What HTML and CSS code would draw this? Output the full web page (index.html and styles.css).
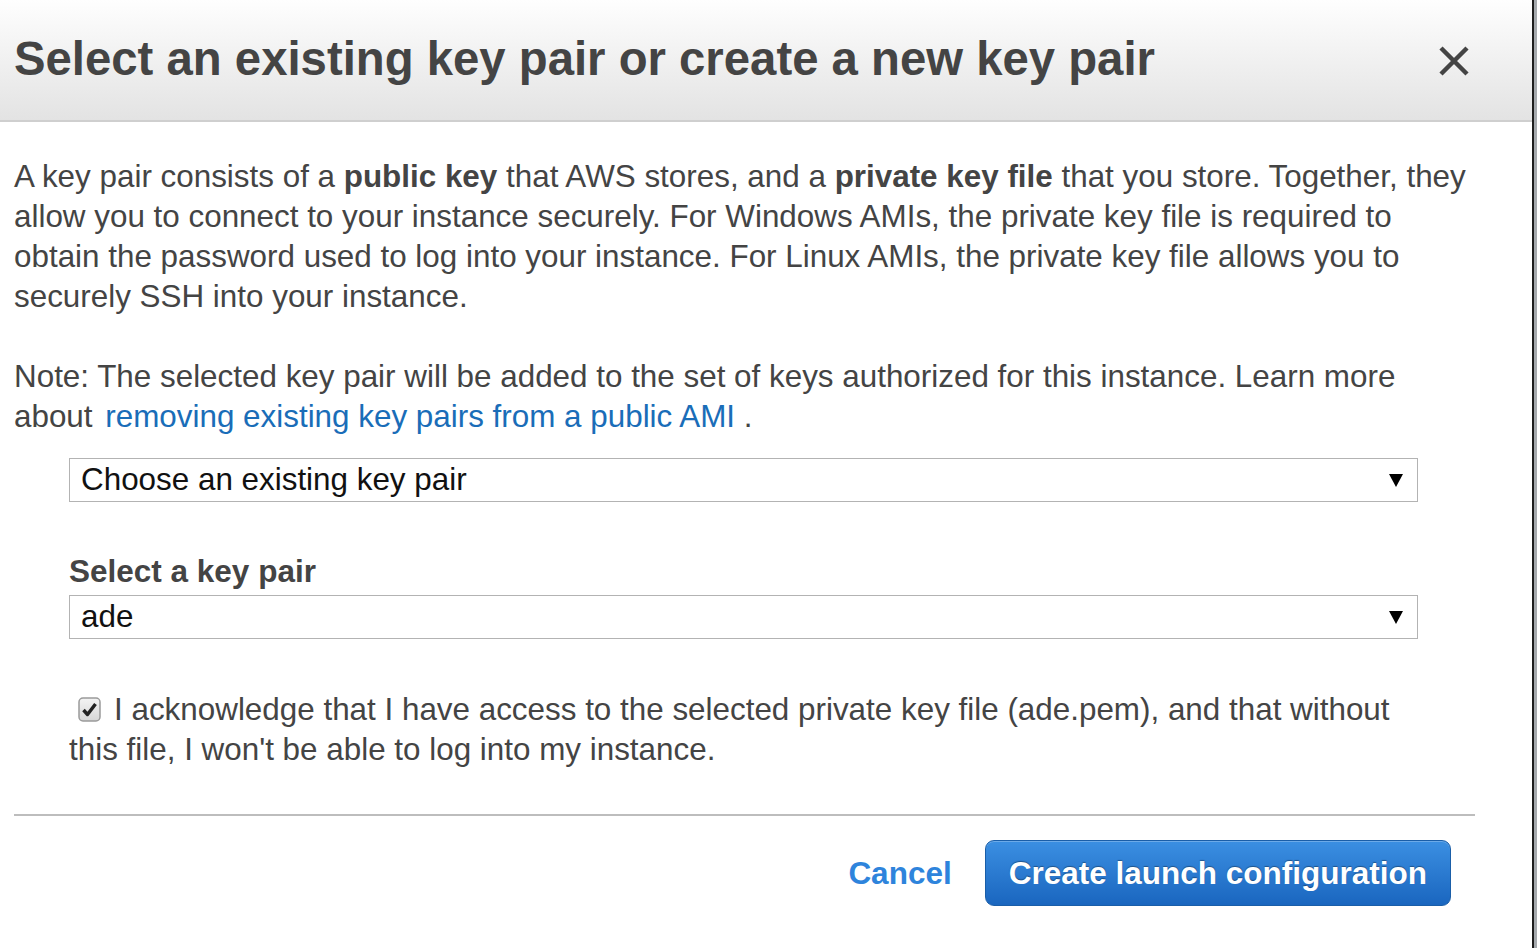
FILE: index.html
```html
<!DOCTYPE html>
<html>
<head>
<meta charset="utf-8">
<link rel="stylesheet" href="styles.css">
</head>
<body>
<div class="page">
  <div class="dialog">
    <div class="header">
      <h1 class="title">Select an existing key pair or create a new key pair</h1>
      <span class="close" aria-label="Close">
        <svg width="32" height="32" viewBox="0 0 32 32"><path d="M3 3 L29 29 M29 3 L3 29" stroke="#444" stroke-width="4.5" fill="none"/></svg>
      </span>
    </div>
    <div class="body">
      <p class="para">A key pair consists of a <b>public key</b> that AWS stores, and a <b>private key file</b> that you store. Together, they allow you to connect to your instance securely. For Windows AMIs, the private key file is required to obtain the password used to log into your instance. For Linux AMIs, the private key file allows you to securely SSH into your instance.</p>
      <p class="para note">Note: The selected key pair will be added to the set of keys authorized for this instance. Learn more about <a class="link" href="#">removing existing key pairs from a public AMI</a> .</p>
      <div class="form">
        <div class="select first">
          <span class="select-text">Choose an existing key pair</span>
          <svg class="arrow" width="14" height="13" viewBox="0 0 14 13"><polygon points="0,0 14,0 7,13" fill="#000"/></svg>
        </div>
        <div class="label">Select a key pair</div>
        <div class="select">
          <span class="select-text">ade</span>
          <svg class="arrow" width="14" height="13" viewBox="0 0 14 13"><polygon points="0,0 14,0 7,13" fill="#000"/></svg>
        </div>
        <p class="ack"><span class="checkbox"><svg width="23" height="25" viewBox="0 0 23 25"><defs><linearGradient id="cb" x1="0" y1="0" x2="0" y2="1"><stop offset="0" stop-color="#f4f4f4"/><stop offset="1" stop-color="#d6d6d6"/></linearGradient></defs><rect x="1" y="1" width="21" height="23" rx="4" fill="url(#cb)" stroke="#9a9a9a" stroke-width="1.5"/><path d="M5.5 13 L9.5 17.5 L17.5 7" stroke="#222" stroke-width="3.4" fill="none" stroke-linejoin="round"/></svg></span>I acknowledge that I have access to the selected private key file (ade.pem), and that without this file, I won't be able to log into my instance.</p>
      </div>
    </div>
    <div class="divider"></div>
    <div class="footer">
      <a class="cancel" href="#">Cancel</a>
      <button class="primary">Create launch configuration</button>
    </div>
  </div>
  <div class="edge"></div>
</div>
</body>
</html>
```

FILE: styles.css
```css
html, body {
  margin: 0;
  padding: 0;
  background: #fff;
}
body {
  font-family: "Liberation Sans", Arial, sans-serif;
  color: #444;
  overflow: hidden;
}
.page {
  display: flex;
  height: 948px;
}
.dialog {
  width: 1532px;
  display: flex;
  flex-direction: column;
}
.edge {
  width: 5px;
  border-left: 2px solid #1e1e1e;
  background: #a6aaae;
  box-sizing: border-box;
}
.header {
  height: 120px;
  background: linear-gradient(#fefefe, #e3e3e3);
  border-bottom: 2px solid #cfcfcf;
  display: flex;
  align-items: center;
  justify-content: space-between;
  padding: 0 62px 0 14px;
}
.title {
  margin: 0 0 4px 0;
  font-size: 47.3px;
  font-weight: bold;
  color: #444;
}
.close {
  display: flex;
  margin-top: 2px;
}
.body {
  padding: 35px 0 0 14px;
}
.para {
  margin: 0 0 40px 0;
  font-size: 31.4px;
  line-height: 40px;
  width: 1466px;
}
.note {
  margin-bottom: 21px;
}
.link {
  color: #1a6db8;
  text-decoration: none;
  margin-left: 4px;
}
.form {
  margin-left: 55px;
  width: 1349px;
}
.select {
  height: 44px;
  border: 1px solid #b3b3b3;
  box-sizing: border-box;
  display: flex;
  align-items: center;
  justify-content: space-between;
  padding: 0 14px 0 11px;
  color: #111;
  font-size: 31.4px;
}
.select.first {
  margin-bottom: 49px;
}
.label {
  font-size: 31.5px;
  font-weight: bold;
  line-height: 40px;
  color: #444;
  margin-bottom: 4px;
}
.ack {
  margin: 51px 0 0 0;
  font-size: 31.4px;
  line-height: 40px;
  width: 1349px;
}
.checkbox {
  display: inline-block;
  vertical-align: -2px;
  margin: 0 13px 0 9px;
}
.checkbox svg {
  display: block;
}
.divider {
  margin: 44px 0 0 14px;
  width: 1461px;
  height: 2px;
  background: #bdbdbd;
}
.footer {
  display: flex;
  justify-content: flex-end;
  align-items: center;
  padding: 24px 81px 0 0;
  gap: 33px;
}
.cancel {
  color: #2e84dc;
  font-weight: bold;
  font-size: 31.5px;
  text-decoration: none;
}
.primary {
  height: 66px;
  padding: 0 23px;
  border: 1.5px solid #1a5ea8;
  border-radius: 9px;
  background: linear-gradient(#3b8fe2, #1a66bf);
  color: #fff;
  font-family: "Liberation Sans", Arial, sans-serif;
  font-weight: bold;
  font-size: 31.5px;
  text-shadow: 0 -1px 1px rgba(0, 0, 0, 0.35);
  box-shadow: inset 0 1px 0 rgba(255, 255, 255, 0.25);
}
```
